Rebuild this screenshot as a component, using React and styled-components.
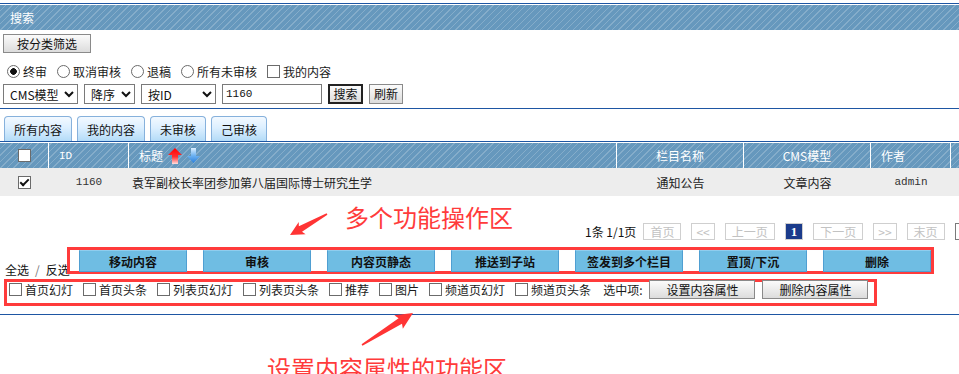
import React from "react";
import styled, { createGlobalStyle } from "styled-components";

const GlobalStyle = createGlobalStyle`
  html, body {
    margin: 0;
    padding: 0;
    background: #fff;
  }
  body {
    font-family: "Noto Sans CJK SC", "Noto Sans", sans-serif;
    font-size: 12px;
    color: #1a1a1a;
  }
`;

const BLUE_LINE = "#1e56a3";

const stripes = `
  background-color: #6698bd;
  background-image: repeating-linear-gradient(
    135deg,
    transparent 0 3.6px,
    rgba(255, 255, 255, 0.2) 3.6px 4.6px
  );
`;

const Page = styled.div`
  position: relative;
  width: 959px;
  height: 374px;
  overflow: hidden;
  padding-top: 3px;
  box-sizing: border-box;
`;

const Panel = styled.div`
  border-top: 1px solid ${BLUE_LINE};
  padding-top: 1px;
`;

const PanelTitle = styled.div`
  ${stripes}
  height: 25px;
  line-height: 25px;
  padding-left: 10px;
  color: #fff;
`;

const FilterArea = styled.div`
  display: flex;
  flex-direction: column;
  align-items: flex-start;
  padding: 4px 3px 4px;
  border-bottom: 1px solid ${BLUE_LINE};
`;

const GrayButton = styled.button`
  width: ${(p) => p.$w}px;
  height: ${(p) => p.$h || 19}px;
  padding: 0;
  box-sizing: border-box;
  border: ${(p) => (p.$dark ? "2px solid #222" : "1px solid #8a8a8a")};
  background: linear-gradient(#fbfbfb, #dcdcdc);
  font-family: "Noto Sans CJK SC", sans-serif;
  font-size: 12px;
  color: #111;
  line-height: 1;
  cursor: pointer;
`;

const Check = styled.input.attrs({ type: "checkbox" })`
  appearance: none;
  position: relative;
  flex: none;
  width: 13px;
  height: 13px;
  margin: 0;
  box-sizing: border-box;
  border: 1px solid #6b6b6b;
  background: #fff;

  &:checked::after {
    content: "";
    position: absolute;
    left: 3px;
    top: 0px;
    width: 3px;
    height: 7px;
    border: solid #111;
    border-width: 0 2px 2px 0;
    transform: rotate(45deg);
  }
`;

const Radio = styled.input.attrs({ type: "radio" })`
  appearance: none;
  flex: none;
  width: 13px;
  height: 13px;
  margin: 0;
  box-sizing: border-box;
  border: 1px solid #6b6b6b;
  border-radius: 50%;
  background: #fff;

  &:checked {
    background: radial-gradient(circle, #111 0 3px, #fff 3.6px);
  }
`;

const RadioRow = styled.div`
  display: flex;
  align-items: center;
  gap: 10px;
  height: 16px;
  margin-top: 10px;
  padding-left: 4px;
`;

const Choice = styled.label`
  display: flex;
  align-items: center;
  gap: 3px;
  white-space: nowrap;
`;

const SelectRow = styled.div`
  display: flex;
  align-items: center;
  gap: 6px;
  height: 20px;
  margin-top: 5px;
`;

const Select = styled.select`
  width: ${(p) => p.$w}px;
  height: 20px;
  border: 1px solid #7a7a7a;
  border-radius: 0;
  padding: 0 2px;
  background: #fff;
  font-family: "Noto Sans CJK SC", sans-serif;
  font-size: 12px;
  color: #111;
`;

const TextInput = styled.input`
  width: ${(p) => p.$w}px;
  height: ${(p) => p.$h || 20}px;
  box-sizing: border-box;
  border: 1px solid #7a7a7a;
  padding: 0 3px;
  font-family: "Liberation Mono", monospace;
  font-size: 11px;
  color: #111;
`;

const TabBar = styled.div`
  display: flex;
  gap: 5px;
  padding: 7px 0 0 4px;
`;

const Tab = styled.div`
  height: 25px;
  box-sizing: border-box;
  padding: 0 9px;
  border: 1px solid #86b1dc;
  border-bottom: none;
  border-radius: 4px 4px 0 0;
  background: linear-gradient(#f3f9ff 0%, #dcefff 45%, #b3dbf7 100%);
  line-height: 25px;
  color: #111;
  white-space: nowrap;
`;

const Table = styled.div`
  border-top: 1px solid ${BLUE_LINE};
  padding-top: 1px;
`;

const Grid = styled.div`
  display: grid;
  grid-template-columns: 49px 80px 488px 127px 127px 80px 80px;
`;

const HeadRow = styled(Grid)`
  ${stripes}
  height: 25px;
`;

const HeadCell = styled.div`
  display: flex;
  align-items: center;
  justify-content: ${(p) => (p.$center ? "center" : "flex-start")};
  gap: 5px;
  padding-left: ${(p) => (p.$center ? 0 : 10)}px;
  border-right: 1px solid #fff;
  color: #fff;
  white-space: nowrap;
`;

const BodyRow = styled(Grid)`
  height: 28px;
  background: #ededed;
`;

const BodyCell = styled.div`
  display: flex;
  align-items: center;
  justify-content: ${(p) => (p.$center ? "center" : "flex-start")};
  padding-left: ${(p) => (p.$center ? 0 : 3)}px;
  color: #222;
  white-space: nowrap;
`;

const Mono = styled.span`
  font-family: "Liberation Mono", monospace;
  font-size: 11px;
  color: ${(p) => p.$color || "#333"};
`;

const PagerRow = styled.div`
  display: flex;
  align-items: center;
  gap: 10px;
  height: 18px;
  margin-top: 26px;
  padding-left: 585px;
  white-space: nowrap;
`;

const PageInfo = styled.span`
  margin-right: -3px;
  color: #111;
`;

const PageBox = styled.span`
  height: 17px;
  box-sizing: border-box;
  padding: 0 ${(p) => p.$pad || 6}px;
  border: 1px solid #cfcfcf;
  line-height: 15px;
  color: #c2c2c2;
`;

const PageCurrent = styled(PageBox)`
  background: #1b3b8b;
  color: #fff;
  font-weight: bold;
  font-family: "Liberation Serif", serif;
  font-size: 13px;
  padding: 0 5px;
`;

const ActionRow = styled.div`
  display: flex;
  align-items: flex-end;
  margin-top: 7px;
`;

const SelectAll = styled.div`
  width: 62px;
  padding-left: 5px;
  margin-bottom: -3px;
  line-height: 14px;
  white-space: nowrap;
  color: #111;
`;

const Slash = styled.span`
  margin: 0 6px;
  color: #777;
`;

const ActionBox = styled.div`
  display: flex;
  gap: 16px;
  width: 867px;
  height: 27px;
  box-sizing: border-box;
  padding-left: 9px;
  border: 3px solid #ff3b3b;
  background: #fff;
`;

const ActionButton = styled.button`
  width: 108px;
  height: 22px;
  padding: 0;
  border: 1px solid #4f9fd2;
  border-top-color: #8fcdee;
  background: #6fbde3;
  font-family: "Noto Sans CJK SC", sans-serif;
  font-size: 12px;
  font-weight: bold;
  color: #111;
  cursor: pointer;
`;

const AttrBox = styled.div`
  display: flex;
  align-items: center;
  gap: 10px;
  width: 873px;
  height: 27px;
  box-sizing: border-box;
  margin: 5px 0 0 4px;
  padding: 0 0 6px 2px;
  border: 3px solid #ff3b3b;
`;

const Picked = styled.div`
  display: flex;
  align-items: center;
  gap: 7px;
  margin-left: 2px;
  white-space: nowrap;
`;

const BottomLine = styled.div`
  margin-top: 8px;
  border-top: 1px solid ${BLUE_LINE};
`;

const Overlay = styled.svg`
  position: absolute;
  left: 0;
  top: 0;
  pointer-events: none;
`;

const Note = styled.div`
  position: absolute;
  left: ${(p) => p.$x}px;
  top: ${(p) => p.$y}px;
  font-size: 24px;
  line-height: 24px;
  color: #ff3b3b;
  white-space: nowrap;
`;

const SortUp = () => (
  <svg width="14" height="16" viewBox="0 0 14 16">
    <defs>
      <linearGradient id="upg" x1="0" y1="0" x2="0" y2="1">
        <stop offset="0" stopColor="#ff0000" />
        <stop offset="0.55" stopColor="#ff3030" />
        <stop offset="1" stopColor="#ffe0e0" />
      </linearGradient>
    </defs>
    <polygon points="7,0 14,7 10,7 10,16 4,16 4,7 0,7" fill="url(#upg)" />
  </svg>
);

const SortDown = () => (
  <svg width="13" height="15" viewBox="0 0 13 15">
    <defs>
      <linearGradient id="dng" x1="0" y1="0" x2="0" y2="1">
        <stop offset="0" stopColor="#dcefff" />
        <stop offset="0.5" stopColor="#6fb3f2" />
        <stop offset="1" stopColor="#2a7fdc" />
      </linearGradient>
    </defs>
    <polygon points="4,0 9,0 9,8 13,8 6.5,15 0,8 4,8" fill="url(#dng)" />
  </svg>
);

function Arrow({ x1, y1, x2, y2, head, wing }) {
  const len = Math.hypot(x2 - x1, y2 - y1);
  const deg = (Math.atan2(y2 - y1, x2 - x1) * 180) / Math.PI;
  const pts = [
    [0, -0.8],
    [len - head + 2, -3.2],
    [len - head, -wing],
    [len, 0],
    [len - head, wing],
    [len - head + 2, 3.2],
    [0, 0.8],
  ]
    .map((p) => p.join(","))
    .join(" ");
  return (
    <polygon
      points={pts}
      transform={`translate(${x1} ${y1}) rotate(${deg})`}
      fill="#ff3434"
    />
  );
}

const tabs = ["所有内容", "我的内容", "未审核", "己审核"];
const actions = ["移动内容", "审核", "内容页静态", "推送到子站", "签发到多个栏目", "置顶/下沉", "删除"];
const attrs = ["首页幻灯", "首页头条", "列表页幻灯", "列表页头条", "推荐", "图片", "频道页幻灯", "频道页头条"];

export default function App() {
  return (
    <Page>
      <GlobalStyle />
      <Panel>
        <PanelTitle>搜索</PanelTitle>
        <FilterArea>
          <GrayButton $w={88}>按分类筛选</GrayButton>
          <RadioRow>
            <Choice>
              <Radio name="st" defaultChecked />
              终审
            </Choice>
            <Choice>
              <Radio name="st" />
              取消审核
            </Choice>
            <Choice>
              <Radio name="st" />
              退稿
            </Choice>
            <Choice>
              <Radio name="st" />
              所有未审核
            </Choice>
            <Choice>
              <Check />
              我的内容
            </Choice>
          </RadioRow>
          <SelectRow>
            <Select $w={75} defaultValue="cms">
              <option value="cms">CMS模型</option>
            </Select>
            <Select $w={51} defaultValue="desc">
              <option value="desc">降序</option>
            </Select>
            <Select $w={75} defaultValue="id">
              <option value="id">按ID</option>
            </Select>
            <TextInput $w={100} defaultValue="1160" />
            <GrayButton $w={35} $h={20} $dark>
              搜索
            </GrayButton>
            <GrayButton $w={34} $h={20}>
              刷新
            </GrayButton>
          </SelectRow>
        </FilterArea>
      </Panel>

      <TabBar>
        {tabs.map((t) => (
          <Tab key={t}>{t}</Tab>
        ))}
      </TabBar>

      <Table>
        <HeadRow>
          <HeadCell $center>
            <Check />
          </HeadCell>
          <HeadCell>
            <Mono $color="#fff">ID</Mono>
          </HeadCell>
          <HeadCell>
            标题
            <SortUp />
            <SortDown />
          </HeadCell>
          <HeadCell $center>栏目名称</HeadCell>
          <HeadCell $center>CMS模型</HeadCell>
          <HeadCell>作者</HeadCell>
          <HeadCell />
        </HeadRow>
        <BodyRow>
          <BodyCell $center>
            <Check defaultChecked />
          </BodyCell>
          <BodyCell $center>
            <Mono>1160</Mono>
          </BodyCell>
          <BodyCell>袁军副校长率团参加第八届国际博士研究生学</BodyCell>
          <BodyCell $center>通知公告</BodyCell>
          <BodyCell $center>文章内容</BodyCell>
          <BodyCell $center>
            <Mono>admin</Mono>
          </BodyCell>
          <BodyCell />
        </BodyRow>
      </Table>

      <PagerRow>
        <PageInfo>1条 1/1页</PageInfo>
        <PageBox>首页</PageBox>
        <PageBox $pad={4}>&lt;&lt;</PageBox>
        <PageBox>上一页</PageBox>
        <PageCurrent>1</PageCurrent>
        <PageBox>下一页</PageBox>
        <PageBox $pad={4}>&gt;&gt;</PageBox>
        <PageBox>末页</PageBox>
        <TextInput $w={34} $h={17} defaultValue="1" />
      </PagerRow>

      <ActionRow>
        <SelectAll>
          全选<Slash>/</Slash>反选
        </SelectAll>
        <ActionBox>
          {actions.map((a) => (
            <ActionButton key={a}>{a}</ActionButton>
          ))}
        </ActionBox>
      </ActionRow>

      <AttrBox>
        {attrs.map((a) => (
          <Choice key={a}>
            <Check />
            {a}
          </Choice>
        ))}
        <Picked>
          选中项:
          <GrayButton $w={106}>设置内容属性</GrayButton>
          <GrayButton $w={106}>删除内容属性</GrayButton>
        </Picked>
      </AttrBox>

      <BottomLine />

      <Note $x={345} $y={205}>多个功能操作区</Note>
      <Note $x={267} $y={356}>设置内容属性的功能区</Note>
      <Overlay width="959" height="374">
        <Arrow x1={327} y1={214} x2={290} y2={235} head={14} wing={7} />
        <Arrow x1={362} y1={345} x2={413} y2={313} head={17} wing={8} />
      </Overlay>
    </Page>
  );
}
